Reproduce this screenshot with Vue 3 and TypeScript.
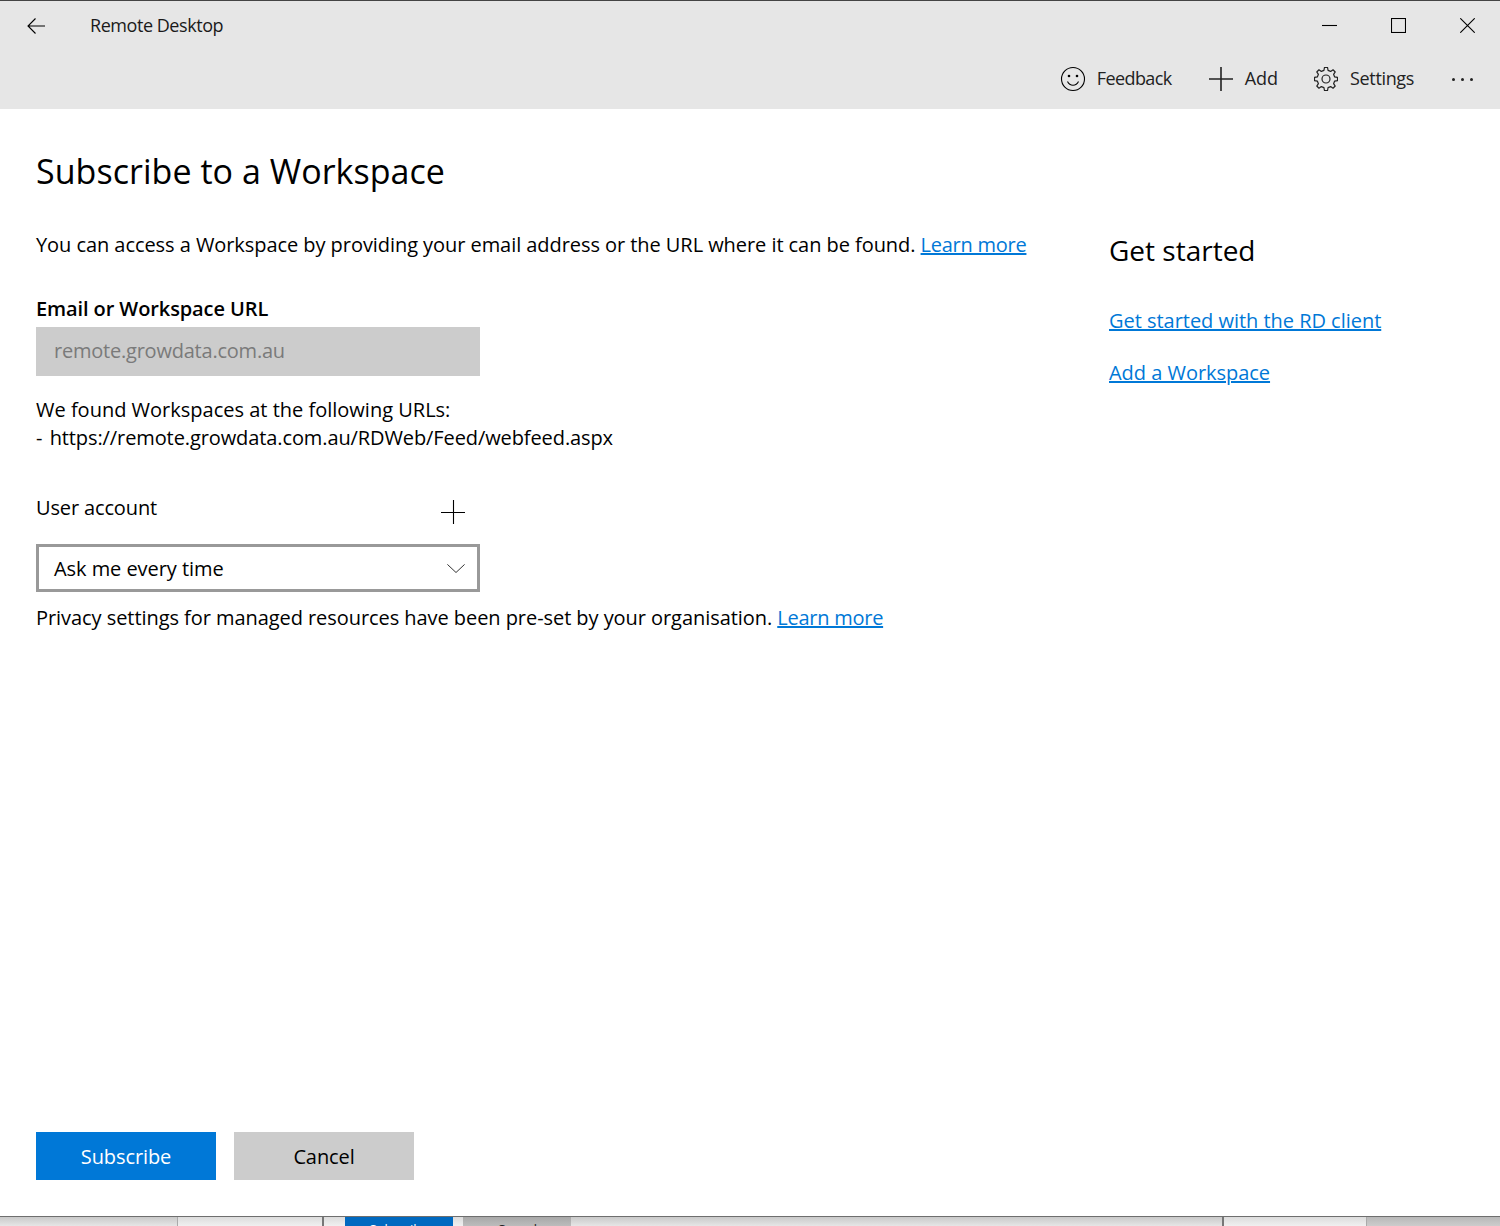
<script setup lang="ts">
const links: string[] = ['Get started with the RD client', 'Add a Workspace']

function gearPath(teeth: number, outer: number, root: number): string {
  const step = (Math.PI * 2) / teeth
  const pt = (r: number, a: number) => `${(12 + r * Math.cos(a)).toFixed(2)} ${(12 + r * Math.sin(a)).toFixed(2)}`
  const parts: string[] = []
  for (let i = 0; i < teeth; i++) {
    const c = i * step - Math.PI / 2
    parts.push(`${i === 0 ? 'M' : 'L'}${pt(root, c - step * 0.3)}`)
    parts.push(`L${pt(outer, c - step * 0.17)}`)
    parts.push(`L${pt(outer, c + step * 0.17)}`)
    parts.push(`L${pt(root, c + step * 0.3)}`)
  }
  return parts.join('') + 'Z'
}
const gear = gearPath(8, 11.6, 8.9)
</script>

<template>
  <div class="window">
    <header class="chrome">
      <div class="title-row">
        <button class="back" aria-label="Back">
          <svg width="18" height="16" viewBox="0 0 18 16"><path d="M8.500.500 1 8l7.500 7.500M1 8h17" /></svg>
        </button>
        <span class="app-title">Remote Desktop</span>
        <div class="caps">
          <span class="cap"><svg width="15" height="15" viewBox="0 0 15 15"><path d="M0 7.500h15" /></svg></span>
          <span class="cap"><svg width="15" height="15" viewBox="0 0 15 15"><rect x=".5" y=".5" width="14" height="14" /></svg></span>
          <span class="cap"><svg width="15" height="15" viewBox="0 0 15 15"><path d="M.3.300l14.400 14.400M14.700.300.3 14.700" /></svg></span>
        </div>
      </div>
      <div class="tools">
        <span class="tool tool-feedback">
          <svg width="26" height="26" viewBox="0 0 26 26"><circle cx="13" cy="13" r="11.500" /><circle class="fill" cx="9" cy="10" r="1.300" /><circle class="fill" cx="17" cy="10" r="1.300" /><path d="M7.500 15.500c1.200 2.500 3.200 3.700 5.500 3.700s4.300-1.200 5.500-3.700" /></svg>
          <span class="label">Feedback</span>
        </span>
        <span class="tool tool-add">
          <svg class="bold-plus" width="24" height="24" viewBox="0 0 24 24"><path d="M0 12h24M12 0v24" /></svg>
          <span class="label">Add</span>
        </span>
        <span class="tool tool-settings">
          <svg class="gear" width="24" height="24" viewBox="0 0 24 24"><path :d="gear" /><circle cx="12" cy="12" r="4" /></svg>
          <span class="label">Settings</span>
        </span>
        <span class="more" aria-label="More"><i></i><i></i><i></i></span>
      </div>
    </header>

    <main class="content">
      <h1>Subscribe to a Workspace</h1>
      <div class="columns">
        <section class="form">
          <p class="intro">You can access a Workspace by providing your email address or the URL where it can be found. <a href="#">Learn more</a></p>
          <label class="url-label">Email or Workspace URL</label>
          <div class="url-field">remote.growdata.com.au</div>
          <p class="found">We found Workspaces at the following URLs:<br />- <span class="feed-url">https://remote.growdata.com.au/RDWeb/Feed/webfeed.aspx</span></p>
          <div class="account-row">
            <span>User account</span>
            <svg width="24" height="24" viewBox="0 0 24 24"><path d="M0 12.500h24M12.500 0v24" /></svg>
          </div>
          <div class="select">
            <span>Ask me every time</span>
            <svg width="18" height="9" viewBox="0 0 18 9"><path d="M.4.400 9 8.500 17.600.400" /></svg>
          </div>
          <p class="privacy">Privacy settings for managed resources have been pre-set by your organisation. <a href="#">Learn more</a></p>
        </section>
        <aside class="side">
          <h2>Get started</h2>
          <a v-for="link in links" :key="link" href="#">{{ link }}</a>
        </aside>
      </div>
      <div class="actions">
        <button class="btn primary">Subscribe</button>
        <button class="btn">Cancel</button>
      </div>
    </main>

    <footer class="behind">
      <div class="seg s1"></div>
      <div class="seg s2"></div>
      <div class="seg s3"></div>
      <div class="seg ghost blue"><span>Subscribe</span></div>
      <div class="seg s4"></div>
      <div class="seg ghost grey"><span>Cancel</span></div>
      <div class="seg s5"></div>
      <div class="seg s6"></div>
      <div class="seg s7"></div>
    </footer>
  </div>
</template>

<style>
html, body { margin: 0; background: #fff; }
</style>

<style scoped>
.window {
  width: 1500px;
  height: 1226px;
  display: flex;
  flex-direction: column;
  overflow: hidden;
  font-family: "Open Sans", "Noto Sans", sans-serif;
  font-size: 20px;
  color: #000;
  background: #fff;
  letter-spacing: -0.06px;
}
svg { display: block; fill: none; stroke: #000; stroke-width: 1.100; flex: none; }
svg .fill { fill: #000; stroke: none; }
a { color: #0078d7; text-decoration: underline; }
p { margin: 0; }

.chrome {
  height: 109px;
  box-sizing: border-box;
  border-top: 1px solid #444;
  background: #e6e6e6;
  display: flex;
  flex-direction: column;
  flex: none;
}
.title-row { display: flex; align-items: center; height: 49px; }
.back { border: 0; background: none; padding: 0; margin-left: 27px; width: 63px; }
.app-title { font-size: 18px; color: #1a1a1a; letter-spacing: -0.45px; padding-bottom: 2px; }
.caps { margin-left: auto; display: flex; gap: 54px; margin-right: 25px; }
.tools { display: flex; align-items: center; justify-content: flex-end; height: 58px; padding-right: 27px; font-size: 18px; color: #222; letter-spacing: -0.6px; }
.tool { display: flex; align-items: center; gap: 12px; margin-right: 36px; }
.tool-feedback { gap: 11px; margin-right: 37px; }
.tool-add { letter-spacing: 0; }
.tool-settings { letter-spacing: -0.35px; }
.label { padding-bottom: 2px; }
.bold-plus { stroke: #222; stroke-width: 1.600; }
.gear { stroke: #222; stroke-width: 1.200; stroke-linejoin: round; }
.more { display: flex; gap: 6px; margin-left: 2px; }
.more i { width: 3px; height: 3px; border-radius: 50%; background: #222; }

.content { flex: 1; display: flex; flex-direction: column; padding: 0 0 36px 36px; min-height: 0; }
h1 { margin: 35px 0 0; font-weight: 400; font-size: 34px; line-height: 54px; letter-spacing: 0.04px; }
.columns { display: flex; flex: 1; min-height: 0; }
.form { width: 1073px; flex: none; padding-top: 33px; }
.intro, .found, .privacy, .account-row span, .side a { line-height: 28px; }
.intro a, .privacy a { letter-spacing: -0.25px; }
.url-label { display: block; margin: 36px 0 4px; font-weight: 600; line-height: 28px; letter-spacing: -0.1px; }
.url-field { width: 444px; height: 49px; box-sizing: border-box; background: #ccc; color: #7a7a7a; padding-left: 18px; line-height: 48px; letter-spacing: -0.22px; }
.found { margin-top: 20px; letter-spacing: 0; }
.feed-url { margin-left: 2px; letter-spacing: -0.1px; }
.account-row { display: flex; justify-content: space-between; width: 430px; margin-top: 42px; height: 50px; letter-spacing: -0.14px; }
.account-row svg { margin-top: 6px; margin-right: 1px; }
.select { width: 444px; height: 48px; box-sizing: border-box; border: 3px solid #999; display: flex; align-items: center; justify-content: space-between; padding: 0 12px 0 15px; }
.select span { line-height: 28px; padding-top: 1px; }
.select svg { stroke: #333; stroke-width: 1; }
.privacy { margin-top: 12px; }
.side { padding-top: 29px; display: flex; flex-direction: column; align-items: flex-start; }
h2 { margin: 0 0 34px; font-size: 28px; font-weight: 400; line-height: 46px; letter-spacing: 0; }
.side a { margin-bottom: 24px; letter-spacing: -0.03px; }
.actions { display: flex; gap: 18px; }
.btn { width: 180px; height: 48px; border: 0; background: #ccc; color: #000; font: inherit; letter-spacing: -0.1px; padding: 0; }
.primary { background: #0078d7; color: #fff; }

.behind { height: 10px; flex: none; display: flex; border-top: 1px solid #6e6e6e; box-sizing: border-box; overflow: hidden; font-size: 13px; }
.seg { height: 100%; background: linear-gradient(#c9c9c9, #e6e6e6); flex: none; }
.s1 { width: 177px; }
.s2 { width: 145px; background: linear-gradient(#dcdcdc, #f0f0f0); border-left: 1px solid #aaa; box-sizing: border-box; }
.s3 { width: 23px; border-left: 2px solid #777; box-sizing: border-box; background: linear-gradient(#dcdcdc, #f0f0f0); }
.ghost { width: 108px; text-align: center; line-height: 24px; }
.blue { background: #0069c0; color: #fff; }
.grey { background: linear-gradient(#a8a8a8, #bcbcbc); color: #222; }
.s4 { width: 10px; background: linear-gradient(#dcdcdc, #f0f0f0); }
.s5 { width: 651px; }
.s6 { width: 144px; border-left: 2px solid #777; box-sizing: border-box; background: linear-gradient(#dcdcdc, #f0f0f0); }
.s7 { flex: 1; background: linear-gradient(#b8b8b8, #cccccc); border-left: 1px solid #aaa; }
</style>
